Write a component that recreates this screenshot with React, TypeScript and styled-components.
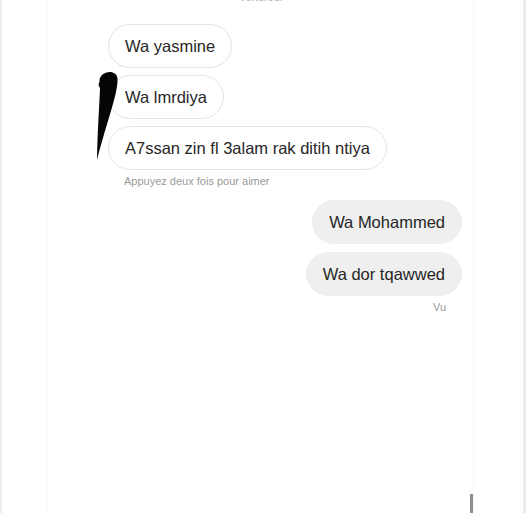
import React from 'react'
import styled, { createGlobalStyle } from 'styled-components'

const GlobalStyle = createGlobalStyle`
  html, body {
    margin: 0;
    padding: 0;
    background: #ffffff;
  }
  body {
    font-family: "Liberation Sans", Arial, sans-serif;
    color: #262626;
  }
`

const Page = styled.div`
  position: relative;
  width: 526px;
  height: 513px;
  box-sizing: border-box;
  border-left: 2px solid #ececec;
  border-right: 3px solid #ececec;
  overflow: hidden;
  background: #fff;
`

const Column = styled.div`
  margin-left: 45px;
  width: 427px;
  height: 100%;
  box-sizing: border-box;
  border-left: 1px solid #f8f8f8;
  border-right: 1px solid #f6f6f6;
  display: flex;
  flex-direction: column;
`

const Timestamp = styled.div`
  margin-top: -9px;
  height: 12px;
  font-size: 11px;
  line-height: 12px;
  text-align: center;
  color: #b4b4b4;
`

const Thread = styled.div`
  display: flex;
  flex-direction: column;
  padding: 21px 11px 0 60px;
`

const Group = styled.div<{ $sent?: boolean }>`
  display: flex;
  flex-direction: column;
  align-items: ${p => (p.$sent ? 'flex-end' : 'flex-start')};
  gap: 7px;
`

const Bubble = styled.div<{ $sent?: boolean }>`
  box-sizing: border-box;
  height: 44px;
  padding: 0 16px;
  display: flex;
  align-items: center;
  border-radius: 22px;
  font-size: 16.5px;
  white-space: nowrap;
  background: ${p => (p.$sent ? '#efefef' : '#ffffff')};
  border: 1px solid ${p => (p.$sent ? '#efefef' : '#e4e4e4')};
`

const Caption = styled.div<{ $sent?: boolean }>`
  font-size: 11px;
  line-height: 14px;
  color: #9a9a9a;
  margin-top: 4px;
  padding: 0 16px;
  align-self: ${p => (p.$sent ? 'flex-end' : 'flex-start')};
`

const SentGroup = styled(Group)`
  margin-top: 12px;
  gap: 8px;
`

const Scribble = styled.svg`
  position: absolute;
  left: 0;
  top: 0;
  pointer-events: none;
`

const Caret = styled.div`
  position: absolute;
  left: 468px;
  top: 494px;
  width: 3px;
  height: 19px;
  background: #8f8f8f;
`

const received = ['Wa yasmine', 'Wa lmrdiya', 'A7ssan zin fl 3alam rak ditih ntiya']
const sent = ['Wa Mohammed', 'Wa dor tqawwed']

export default function App() {
  return (
    <>
      <GlobalStyle />
      <Page>
        <Column>
          <Timestamp>Vendredi</Timestamp>
          <Thread>
            <Group>
              {received.map(t => (
                <Bubble key={t}>{t}</Bubble>
              ))}
            </Group>
            <Caption>Appuyez deux fois pour aimer</Caption>
            <SentGroup $sent>
              {sent.map(t => (
                <Bubble key={t} $sent>
                  {t}
                </Bubble>
              ))}
            </SentGroup>
            <Caption $sent>Vu</Caption>
          </Thread>
        </Column>
        <Scribble width="526" height="513" viewBox="0 0 526 513">
          <path
            d="M97.5 82 C96.5 71 115 68 115.5 79 C116 93 106 118 95 160 C95.5 130 97.5 104 98 88 C96.5 86 96 84 97.5 82 Z"
            fill="#050505"
          />
        </Scribble>
        <Caret />
      </Page>
    </>
  )
}
